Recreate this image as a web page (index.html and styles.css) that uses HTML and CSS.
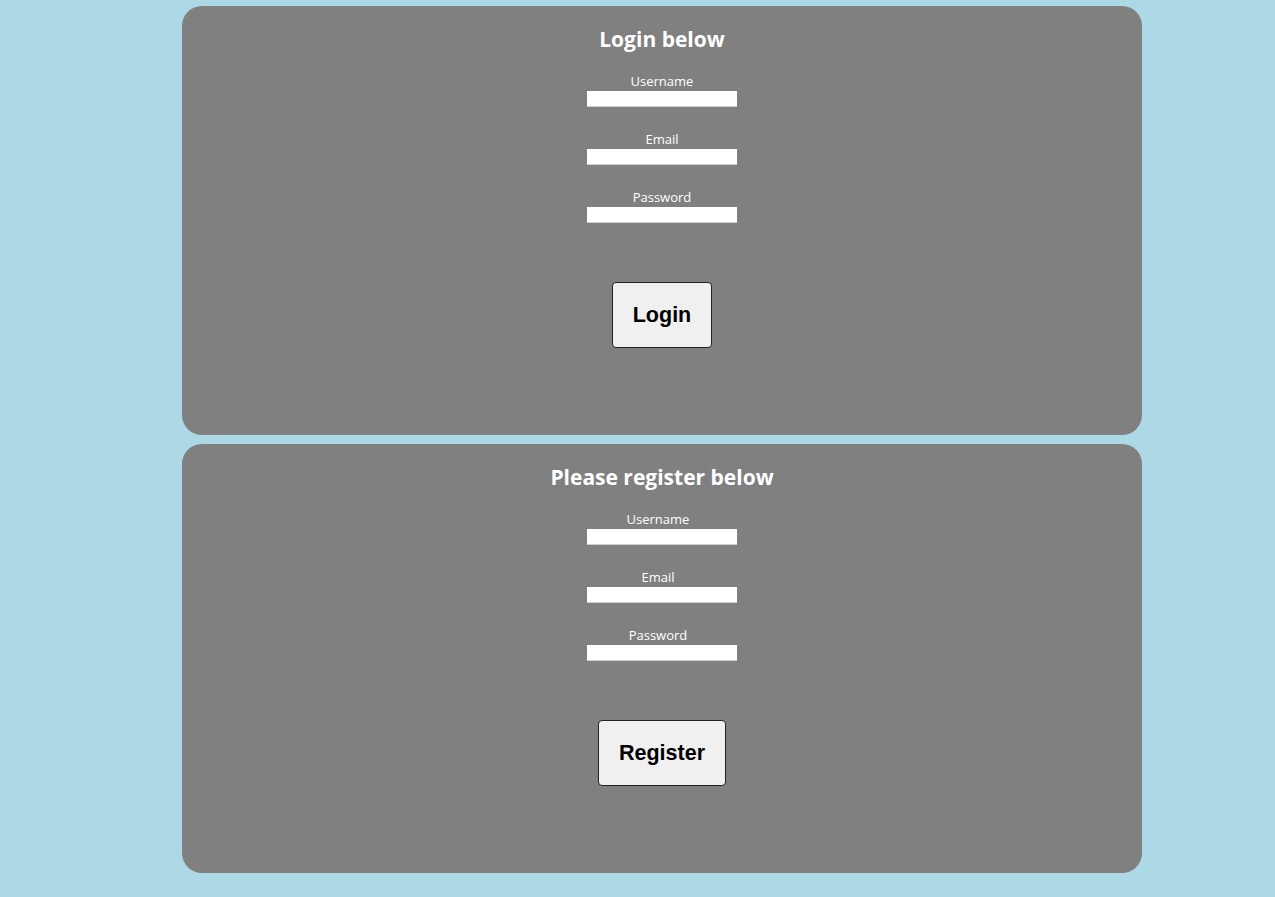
FILE: index.html
```html
<!DOCTYPE html>
<html lang="en">
<head>
<meta charset="utf-8">
<title>Login / Register</title>
<link rel="stylesheet" href="styles.css">
</head>
<body>
<main class="page">
  <section class="card">
    <h2 class="card-title">Login below</h2>
    <form class="form">
      <div class="field">
        <label class="field-label" for="lu">Username</label>
        <input class="field-input" id="lu" type="text">
      </div>
      <div class="field">
        <label class="field-label" for="le">Email</label>
        <input class="field-input" id="le" type="email">
      </div>
      <div class="field">
        <label class="field-label" for="lp">Password</label>
        <input class="field-input" id="lp" type="password">
      </div>
      <button class="btn" type="button">Login</button>
    </form>
  </section>
  <section class="card">
    <h2 class="card-title">Please register below</h2>
    <form class="form">
      <div class="field">
        <label class="field-label field-label--shift" for="ru">Username</label>
        <input class="field-input" id="ru" type="text">
      </div>
      <div class="field">
        <label class="field-label field-label--shift" for="re">Email</label>
        <input class="field-input" id="re" type="email">
      </div>
      <div class="field">
        <label class="field-label field-label--shift" for="rp">Password</label>
        <input class="field-input" id="rp" type="password">
      </div>
      <button class="btn" type="button">Register</button>
    </form>
  </section>
</main>
</body>
</html>
```
FILE: styles.css
```css
html, body {
  margin: 0;
  padding: 0;
}
body {
  background: #add8e6;
  font-family: "Open Sans", "Noto Sans", sans-serif;
}
.page {
  display: flex;
  flex-direction: column;
  align-items: flex-start;
  gap: 9px;
  padding: 6px 0 0 182px;
}
.card {
  width: 960px;
  height: 429px;
  box-sizing: border-box;
  background: #808080;
  border-radius: 20px;
  display: flex;
  flex-direction: column;
  align-items: center;
  padding-top: 20px;
  color: #fff;
}
.card-title {
  margin: 0 0 21px;
  font-size: 21px;
  line-height: 26px;
  font-weight: 700;
}
.form {
  display: flex;
  flex-direction: column;
  align-items: center;
}
.field {
  display: flex;
  flex-direction: column;
  align-items: center;
  margin-bottom: 24px;
}
.field-label {
  font-size: 13px;
  line-height: 17px;
  margin-bottom: 1px;
}
.field-label--shift {
  padding-right: 8px;
}
.field-input {
  width: 150px;
  height: 16px;
  box-sizing: border-box;
  border: none;
  border-bottom: 1px solid #d0d0d0;
  background: #fff;
  padding: 0 2px;
  margin: 0;
}
.btn {
  margin-top: 35px;
  font-family: "Liberation Sans", Arial, sans-serif;
  font-weight: 700;
  font-size: 21.5px;
  line-height: 24px;
  padding: 20px 20px;
  background: #f0f0f0;
  color: #000;
  border: 1px solid #222;
  border-radius: 4px;
}
```
